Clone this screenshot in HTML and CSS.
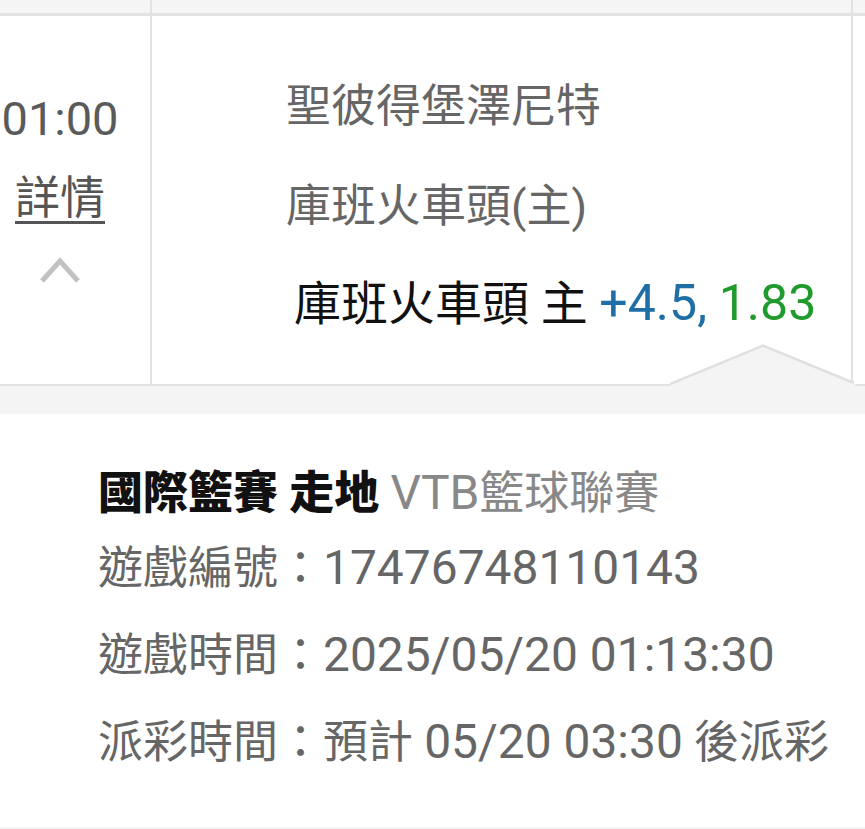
FILE: index.html
```html
<!DOCTYPE html>
<html lang="zh-Hant">
<head>
  <meta charset="UTF-8">
  <title>注單詳情</title>
  <link rel="stylesheet" href="styles.css">
</head>
<body>
  <!-- tail of the previous bet row -->
  <div class="prev-row">
    <div class="cell-time"></div>
    <div class="cell-match"></div>
    <div class="cell-rest"></div>
  </div>

  <!-- the expanded bet row -->
  <div class="bet-row">
    <div class="cell-time">
      <div class="time">01:00</div>
      <a class="detail-link">詳情</a>
      <svg class="chevron" width="40" height="27" viewBox="0 0 40 27">
        <polyline points="2,24 20,4 38,24" />
      </svg>
    </div>
    <div class="cell-match">
      <div class="team">聖彼得堡澤尼特</div>
      <div class="team">庫班火車頭(主)</div>
      <div class="pick">庫班火車頭 主 <span class="num handicap">+4.5,</span> <span class="num odds">1.83</span></div>
    </div>
    <div class="cell-rest"></div>
  </div>

  <!-- detail panel that opens under the row -->
  <div class="detail">
    <svg class="pointer" width="186" height="43" viewBox="0 0 186 43">
      <polygon class="pointer-fill" points="0,40 93,1.5 185,40 186,43 0,43" />
      <polyline class="pointer-line" points="0,40 93,1.5 184,39" />
    </svg>
    <div class="detail-strip"></div>
    <div class="detail-body">
      <div class="league"><b>國際籃賽 走地</b> <span class="league-name"><span class="num">VTB</span>籃球聯賽</span></div>
      <div class="info">遊戲編號：<span class="num">17476748110143</span></div>
      <div class="info">遊戲時間：<span class="num">2025/05/20 01:13:30</span></div>
      <div class="info">派彩時間：預計 <span class="num">05/20 03:30</span> 後派彩</div>
    </div>
  </div>
  <div class="next-row"></div>
</body>
</html>
```

FILE: styles.css
```css
html, body {
  margin: 0;
  padding: 0;
  background: #fff;
  font-family: Roboto, "Noto Sans CJK TC", sans-serif;
  font-size: 45px;
  color: #666;
  overflow: hidden;
}

.num { font-size: 1.065em; }

/* Shared table columns */
.cell-time {
  width: 150px;
  border-right: 2px solid #e2e2e2;
  box-sizing: content-box;
}
.cell-match {
  width: 701px;
  border-right: 2px solid #e2e2e2;
}
.cell-rest { flex: 1; }

.prev-row {
  display: flex;
  height: 13px;
  background: #f5f5f5;
  border-bottom: 3px solid #e2e2e2;
}

/* Bet row */
.bet-row {
  display: flex;
  height: 368px;
  border-bottom: 2px solid #e2e2e2;
}
.bet-row .cell-time {
  display: flex;
  flex-direction: column;
  align-items: center;
}
.time {
  width: 120px;
  padding-top: 73px;
  line-height: 60px;
  height: 60px;
  text-align: center;
  font-size: 47px;
  color: #5a5a5a;
  white-space: nowrap;
  margin-right: 30px;
}
.detail-link {
  margin-right: 30px;
  height: 100px;
  line-height: 100px;
  color: #555;
  text-decoration: underline;
  text-decoration-thickness: 3px;
  text-underline-offset: 7px;
}
.chevron {
  margin-top: 8px;
  margin-right: 30px;
}
.chevron polyline {
  fill: none;
  stroke: #c2c2c2;
  stroke-width: 5;
}

.cell-match {
  padding-top: 41px;
  padding-left: 134px;
  box-sizing: border-box;
}
.team {
  line-height: 100px;
  white-space: nowrap;
}
.pick {
  margin-left: 8px;
  line-height: 92px;
  font-size: 47px;
  color: #111;
  white-space: nowrap;
}
.handicap { color: #1f6fa6; }
.odds { color: #1f9a2c; }

/* Detail panel */
.detail { position: relative; }
.pointer {
  position: absolute;
  left: 670px;
  top: -42px;
}
.pointer-fill { fill: #f4f4f4; }
.pointer-line {
  fill: none;
  stroke: #e0e0e0;
  stroke-width: 2.5;
}
.detail-strip {
  height: 28px;
  background: #f4f4f4;
}
.detail-body {
  padding: 48px 0 41px 98px;
  white-space: nowrap;
}
.league {
  line-height: 62px;
  color: #111;
}
.league b { font-weight: 900; }
.league-name { color: #888; }
.info { line-height: 87px; }

.next-row {
  height: 20px;
  background: #f4f4f4;
}
```
